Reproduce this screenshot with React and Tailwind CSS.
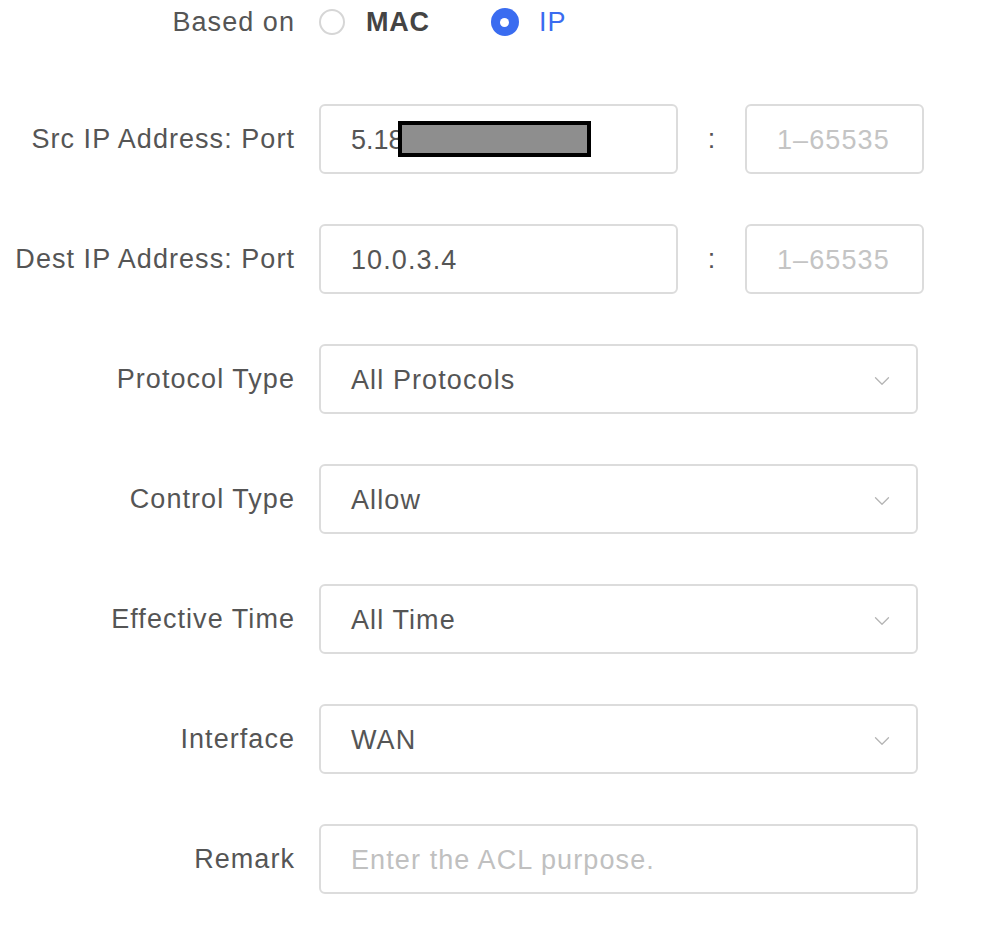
import { ChevronDown } from 'lucide-react'

const font = { fontFamily: '"Liberation Sans", Arial, sans-serif' }

function Row({ label, children }) {
  return (
    <div className="flex h-[70px] items-center">
      <div className="w-[295px] shrink-0 text-right text-[27px] tracking-[1.05px] text-[#555]">{label}</div>
      <div className="ml-[24px] flex items-center">{children}</div>
    </div>
  )
}

function Box({ className = '', children }) {
  return (
    <div
      className={`flex h-[70px] items-center rounded-[6px] border-2 border-[#dcdcdc] bg-white px-[30px] pt-[3px] text-[27px] tracking-[1.1px] ${className}`}
    >
      {children}
    </div>
  )
}

function Select({ value }) {
  return (
    <Box className="w-[599px] justify-between text-[#555]">
      <span>{value}</span>
      <ChevronDown className="mr-[-9px] h-[26px] w-[26px] text-[#b5b5b5]" strokeWidth={1.2} />
    </Box>
  )
}

function Port() {
  return (
    <>
      <span className="w-[67px] text-center text-[27px] text-[#555]">:</span>
      <Box className="w-[179px] text-[#c4c4c4]">1–65535</Box>
    </>
  )
}

export default function App() {
  return (
    <div className="min-h-[928px] w-[994px] bg-white" style={font}>
      <div className="flex h-[44px] items-center">
        <div className="w-[295px] text-right text-[27px] tracking-[1.05px] text-[#555]">Based on</div>
        <div className="ml-[24px] flex items-center">
          <span className="h-[26px] w-[26px] rounded-full border-2 border-[#d6d6d6]" />
          <span className="ml-[21px] text-[27px] font-semibold tracking-[0.8px] text-[#444]">MAC</span>
          <span className="ml-[61px] flex h-[28px] w-[28px] items-center justify-center rounded-full bg-[#3a6cf0]">
            <span className="h-[9px] w-[9px] rounded-full bg-white" />
          </span>
          <span className="ml-[20px] text-[27px] tracking-[1px] text-[#3a6cf0]">IP</span>
        </div>
      </div>

      <div className="mt-[60px] flex flex-col gap-[50px]">
        <Row label="Src IP Address: Port">
          <Box className="w-[359px] text-[#555]">
            <span className="tracking-normal">5.18</span>
            <span className="ml-[-6px] mt-[-3px] inline-block h-[36px] w-[193px] border-[4px] border-black bg-[#8e8e8e]" />
          </Box>
          <Port />
        </Row>
        <Row label="Dest IP Address: Port">
          <Box className="w-[359px] text-[#555]">10.0.3.4</Box>
          <Port />
        </Row>
        <Row label="Protocol Type">
          <Select value="All Protocols" />
        </Row>
        <Row label="Control Type">
          <Select value="Allow" />
        </Row>
        <Row label="Effective Time">
          <Select value="All Time" />
        </Row>
        <Row label="Interface">
          <Select value="WAN" />
        </Row>
        <Row label="Remark">
          <Box className="w-[599px] text-[#c0c0c0]">Enter the ACL purpose.</Box>
        </Row>
      </div>
    </div>
  )
}
